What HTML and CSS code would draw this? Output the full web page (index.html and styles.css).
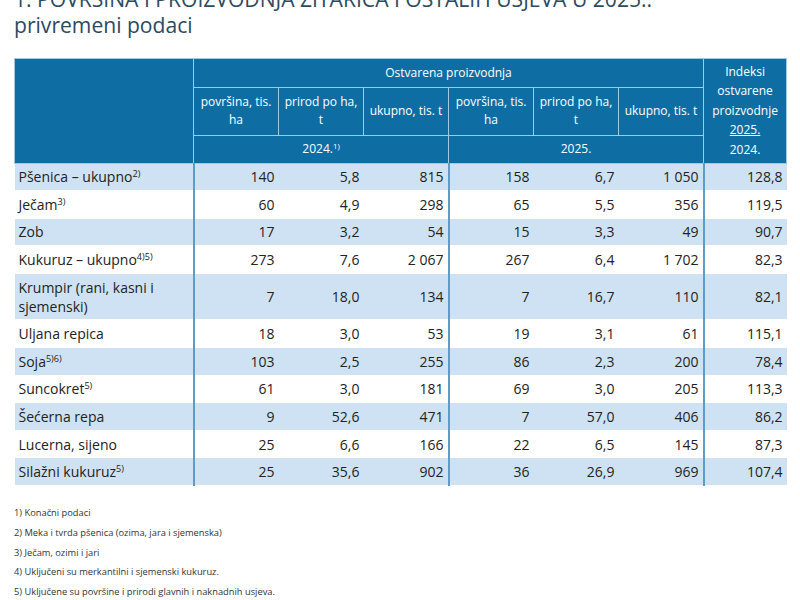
FILE: index.html
```html
<!DOCTYPE html>
<html lang="hr">
<head>
<meta charset="utf-8">
<title>Površina i proizvodnja žitarica</title>
<link rel="stylesheet" href="styles.css">
</head>
<body>
<div class="page">
  <h1 class="title">1. POVRŠINA I PROIZVODNJA ŽITARICA I OSTALIH USJEVA U 2025.:<br>privremeni podaci</h1>
  <table class="data">
    <colgroup>
      <col class="c-label">
      <col class="c-num"><col class="c-num"><col class="c-num">
      <col class="c-num"><col class="c-num"><col class="c-num">
      <col class="c-idx">
    </colgroup>
    <thead>
      <tr class="h1">
        <th rowspan="3"></th>
        <th colspan="6">Ostvarena proizvodnja</th>
        <th rowspan="3" class="idx">Indeksi<br>ostvarene<br>proizvodnje<br><span class="u">2025.</span><br>2024.</th>
      </tr>
      <tr class="h2">
        <th>površina, tis. ha</th>
        <th>prirod po ha, t</th>
        <th>ukupno, tis. t</th>
        <th>površina, tis. ha</th>
        <th>prirod po ha, t</th>
        <th>ukupno, tis. t</th>
      </tr>
      <tr class="h3">
        <th colspan="3">2024.<sup>1)</sup></th>
        <th colspan="3">2025.</th>
      </tr>
    </thead>
    <tbody>
      <tr><td class="lbl">Pšenica – ukupno<sup>2)</sup></td><td class="g">140</td><td>5,8</td><td>815</td><td class="g">158</td><td>6,7</td><td>1 050</td><td class="g">128,8</td></tr>
      <tr><td class="lbl">Ječam<sup>3)</sup></td><td class="g">60</td><td>4,9</td><td>298</td><td class="g">65</td><td>5,5</td><td>356</td><td class="g">119,5</td></tr>
      <tr><td class="lbl">Zob</td><td class="g">17</td><td>3,2</td><td>54</td><td class="g">15</td><td>3,3</td><td>49</td><td class="g">90,7</td></tr>
      <tr><td class="lbl">Kukuruz – ukupno<sup>4)5)</sup></td><td class="g">273</td><td>7,6</td><td>2 067</td><td class="g">267</td><td>6,4</td><td>1 702</td><td class="g">82,3</td></tr>
      <tr><td class="lbl">Krumpir (rani, kasni i sjemenski)</td><td class="g">7</td><td>18,0</td><td>134</td><td class="g">7</td><td>16,7</td><td>110</td><td class="g">82,1</td></tr>
      <tr><td class="lbl">Uljana repica</td><td class="g">18</td><td>3,0</td><td>53</td><td class="g">19</td><td>3,1</td><td>61</td><td class="g">115,1</td></tr>
      <tr><td class="lbl">Soja<sup>5)6)</sup></td><td class="g">103</td><td>2,5</td><td>255</td><td class="g">86</td><td>2,3</td><td>200</td><td class="g">78,4</td></tr>
      <tr><td class="lbl">Suncokret<sup>5)</sup></td><td class="g">61</td><td>3,0</td><td>181</td><td class="g">69</td><td>3,0</td><td>205</td><td class="g">113,3</td></tr>
      <tr><td class="lbl">Šećerna repa</td><td class="g">9</td><td>52,6</td><td>471</td><td class="g">7</td><td>57,0</td><td>406</td><td class="g">86,2</td></tr>
      <tr><td class="lbl">Lucerna, sijeno</td><td class="g">25</td><td>6,6</td><td>166</td><td class="g">22</td><td>6,5</td><td>145</td><td class="g">87,3</td></tr>
      <tr><td class="lbl">Silažni kukuruz<sup>5)</sup></td><td class="g">25</td><td>35,6</td><td>902</td><td class="g">36</td><td>26,9</td><td>969</td><td class="g">107,4</td></tr>
    </tbody>
  </table>
  <div class="notes">
    <p>1) Konačni podaci</p>
    <p>2) Meka i tvrda pšenica (ozima, jara i sjemenska)</p>
    <p>3) Ječam, ozimi i jari</p>
    <p>4) Uključeni su merkantilni i sjemenski kukuruz.</p>
    <p>5) Uključene su površine i prirodi glavnih i naknadnih usjeva.</p>
  </div>
</div>
</body>
</html>
```
FILE: styles.css
```css
html, body {
  margin: 0;
  padding: 0;
  background: #ffffff;
  overflow: hidden;
}
body {
  font-family: "Open Sans", "Noto Sans", sans-serif;
  color: #222222;
}
.page {
  padding: 0 14px;
}
.title {
  margin: -14.5px 0 20px;
  font-size: 21.1px;
  line-height: 26px;
  font-weight: 400;
  color: #2d4a60;
}
.data {
  width: 772px;
  border-collapse: collapse;
  table-layout: fixed;
}
.c-label { width: 179px; }
.c-num { width: 85px; }
.c-idx { width: 83px; }
.data thead th {
  background: #0e6ea3;
  color: #ffffff;
  font-weight: 400;
  font-size: 12px;
  line-height: 18px;
  border: 1.5px solid #a3c9e1;
  padding: 0 4px;
  text-align: center;
  vertical-align: middle;
}
.data thead tr.h1 { height: 29px; }
.data thead tr.h2 { height: 48px; }
.data thead tr.h3 { height: 28px; }
.data thead th.idx {
  line-height: 19.5px;
  padding: 0 2px;
}
.u { text-decoration: underline; }
.data sup {
  font-size: 0.65em;
  line-height: 0;
  vertical-align: 0.5em;
}
.data tbody td {
  font-size: 14px;
  line-height: 19px;
  padding: 3.8px 4px;
  border-bottom: 1px solid #ffffff;
  text-align: right;
  vertical-align: middle;
}
.data tbody tr:nth-child(odd) td { background: #cfe2f3; }
.data tbody td.lbl { text-align: left; }
.data tbody td.g { border-left: 2px solid #5a9cca; }
.notes {
  margin-top: 17px;
  font-size: 9.3px;
  line-height: 19.75px;
  color: #333333;
}
.notes p { margin: 0; }
```
